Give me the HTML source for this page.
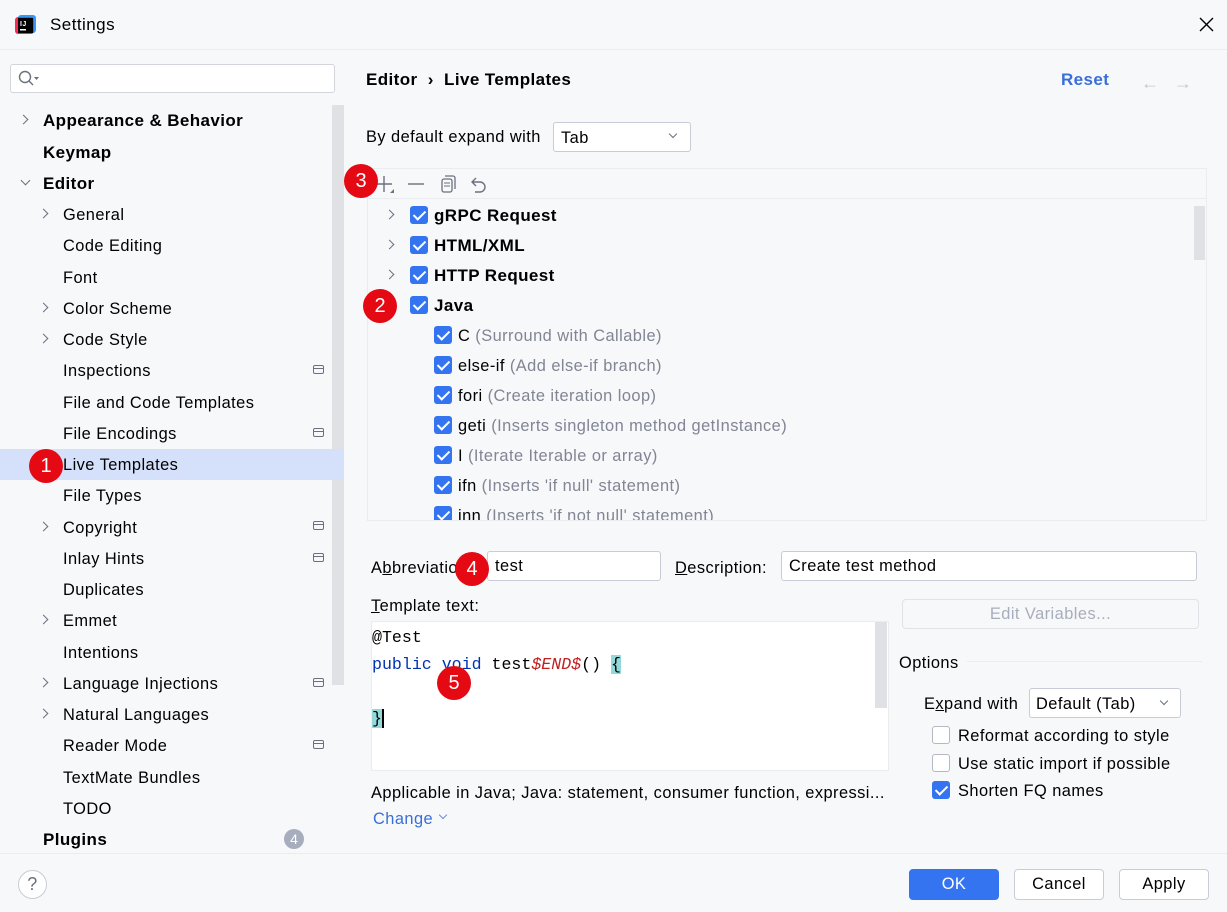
<!DOCTYPE html>
<html><head><meta charset="utf-8"><style>
*{margin:0;padding:0;box-sizing:border-box}
body{width:1227px;height:912px;background:#f7f8fa;font-family:"Liberation Sans",sans-serif;font-size:16.4px;letter-spacing:.45px;color:#000;position:relative;overflow:hidden}
.a{position:absolute;white-space:nowrap}
.r{position:absolute;height:22px;line-height:24px;white-space:nowrap}
.b{font-weight:bold;letter-spacing:.4px}
.chev{position:absolute;width:7px;height:7px;border-right:1.5px solid #6c707e;border-bottom:1.5px solid #6c707e}
.cr{transform:rotate(-45deg)}
.cd{transform:rotate(45deg)}
.cb{position:absolute;width:18px;height:18px;background:#3574f0;border-radius:3px}
.cb:after{content:"";position:absolute;left:6px;top:2px;width:5px;height:10px;border-right:2px solid #fff;border-bottom:2px solid #fff;transform:rotate(45deg)}
.cbe{position:absolute;width:18px;height:18px;border:1px solid #b4b8bf;border-radius:3px;background:#fff}
.g{color:#818594}
.badge{position:absolute;width:34px;height:34px;border-radius:50%;background:#e50914;color:#fff;font-size:20px;line-height:34px;text-align:center;letter-spacing:0}
.pi{position:absolute;width:11px;height:9px;border:1.5px solid #6c707e;border-radius:2px}
.pi:after{content:"";position:absolute;left:0;right:0;top:2px;border-top:1.5px solid #6c707e}
.inp{position:absolute;background:#fff;border:1px solid #c9ccd6;border-radius:3px}
.mono{font-family:"Liberation Mono","DejaVu Sans Mono",monospace;font-size:16.6px;letter-spacing:0}
.btn{position:absolute;height:31px;border:1px solid #c9ccd6;border-radius:4px;background:#fff;text-align:center;line-height:29px}
</style></head><body>
<div class="a" style="left:0;top:0;width:1227px;height:50px;border-bottom:1px solid #ebecf0"></div>
<svg class="a" style="left:15px;top:15px" width="21" height="21"><rect x="0" y="2" width="19" height="17" rx="3" fill="#fe2857"/><rect x="3" y="0" width="18" height="18" rx="3" fill="#087cfa" opacity=".8"/><rect x="3" y="3" width="15" height="15" fill="#000"/><text x="5" y="11" fill="#fff" font-size="7" font-family="Liberation Sans" font-weight="bold">IJ</text><rect x="5" y="14" width="6" height="1.5" fill="#fff"/></svg>
<div class="a" style="left:50px;top:15px;font-size:17px">Settings</div>
<svg class="a" style="left:1199px;top:17px" width="15" height="15"><path d="M1 1L14 14M14 1L1 14" stroke="#000" stroke-width="1.4"/></svg>
<div class="inp" style="left:10px;top:64px;width:325px;height:29px;border-color:#d3d5db"></div>
<svg class="a" style="left:18px;top:70px" width="24" height="18"><circle cx="7" cy="7" r="5.5" fill="none" stroke="#6c707e" stroke-width="1.4"/><path d="M11 11L15 15" stroke="#6c707e" stroke-width="1.4"/><path d="M16 7h5l-2.5 3z" fill="#6c707e"/></svg>
<div class="a" style="left:332px;top:105px;width:12px;height:580px;background:#dfe1e5"></div>
<div class="a" style="left:0;top:449px;width:344px;height:31px;background:#d5e1fb"></div>
<div class="chev cr" style="left:20px;top:116px"></div>
<div class="r b" style="left:43px;top:109px;font-size:17px">Appearance &amp; Behavior</div>
<div class="r b" style="left:43px;top:141px;font-size:17px">Keymap</div>
<div class="chev cd" style="left:22px;top:177px"></div>
<div class="r b" style="left:43px;top:172px;font-size:17px">Editor</div>
<div class="chev cr" style="left:40px;top:210px"></div><div class="r" style="left:63px;top:203px">General</div>
<div class="r" style="left:63px;top:234px">Code Editing</div>
<div class="r" style="left:63px;top:266px">Font</div>
<div class="chev cr" style="left:40px;top:304px"></div><div class="r" style="left:63px;top:297px">Color Scheme</div>
<div class="chev cr" style="left:40px;top:335px"></div><div class="r" style="left:63px;top:328px">Code Style</div>
<div class="r" style="left:63px;top:359px">Inspections</div><div class="pi" style="left:313px;top:365px"></div>
<div class="r" style="left:63px;top:391px">File and Code Templates</div>
<div class="r" style="left:63px;top:422px">File Encodings</div><div class="pi" style="left:313px;top:428px"></div>
<div class="r" style="left:63px;top:453px">Live Templates</div>
<div class="r" style="left:63px;top:484px">File Types</div>
<div class="chev cr" style="left:40px;top:523px"></div><div class="r" style="left:63px;top:516px">Copyright</div><div class="pi" style="left:313px;top:521px"></div>
<div class="r" style="left:63px;top:547px">Inlay Hints</div><div class="pi" style="left:313px;top:553px"></div>
<div class="r" style="left:63px;top:578px">Duplicates</div>
<div class="chev cr" style="left:40px;top:616px"></div><div class="r" style="left:63px;top:609px">Emmet</div>
<div class="r" style="left:63px;top:641px">Intentions</div>
<div class="chev cr" style="left:40px;top:679px"></div><div class="r" style="left:63px;top:672px">Language Injections</div><div class="pi" style="left:313px;top:678px"></div>
<div class="chev cr" style="left:40px;top:710px"></div><div class="r" style="left:63px;top:703px">Natural Languages</div>
<div class="r" style="left:63px;top:734px">Reader Mode</div><div class="pi" style="left:313px;top:740px"></div>
<div class="r" style="left:63px;top:766px">TextMate Bundles</div>
<div class="r" style="left:63px;top:797px">TODO</div>
<div class="r b" style="left:43px;top:828px;font-size:17px">Plugins</div>
<div class="a" style="left:284px;top:829px;width:20px;height:20px;border-radius:50%;background:#a8adbd;color:#fff;font-size:14px;line-height:20px;text-align:center;letter-spacing:0">4</div>
<div class="badge" style="left:29px;top:449px">1</div>
<div class="r b" style="left:366px;top:68px;font-size:17px">Editor&nbsp;&nbsp;›&nbsp;&nbsp;Live Templates</div>
<div class="r b" style="left:1061px;top:68px;color:#3a6fd8;font-size:17px">Reset</div>
<div class="r" style="left:1141px;top:71px;color:#c4c7ce;font-size:18px">←</div>
<div class="r" style="left:1174px;top:71px;color:#c4c7ce;font-size:18px">→</div>
<div class="r" style="left:366px;top:125px">By default expand with</div>
<div class="inp" style="left:553px;top:122px;width:138px;height:30px"></div>
<div class="r" style="left:561px;top:126px">Tab</div>
<div class="chev cd" style="left:670px;top:131px;width:6px;height:6px"></div>
<div class="a" style="left:367px;top:168px;width:840px;height:353px;border:1px solid #ebecf0"></div>
<div class="a" style="left:367px;top:198px;width:840px;border-top:1px solid #ebecf0"></div>
<svg class="a" style="left:372px;top:173px" width="130" height="22"><path d="M12 3v16M4 11h16" stroke="#6c707e" stroke-width="1.4"/><path d="M22 20h-4l4-4z" fill="#6c707e"/><path d="M36 11h16" stroke="#6c707e" stroke-width="1.4"/><rect x="70" y="6" width="10" height="13" rx="2" fill="none" stroke="#6c707e" stroke-width="1.3"/><path d="M73 3h8a2 2 0 0 1 2 2v11" fill="none" stroke="#6c707e" stroke-width="1.3"/><path d="M72 10h6M72 13h6" stroke="#6c707e"/><path d="M104 5l-4 4 4 4M100 9h8a5 5 0 0 1 0 10h-5" fill="none" stroke="#6c707e" stroke-width="1.4"/></svg>
<div class="a" style="left:1194px;top:206px;width:11px;height:54px;background:#dfe1e5"></div>
<div class="chev cr" style="left:386px;top:211px"></div><div class="cb" style="left:410px;top:206px"></div><div class="r b" style="left:434px;top:204px;font-size:17px">gRPC Request</div>
<div class="chev cr" style="left:386px;top:241px"></div><div class="cb" style="left:410px;top:236px"></div><div class="r b" style="left:434px;top:234px;font-size:17px">HTML/XML</div>
<div class="chev cr" style="left:386px;top:271px"></div><div class="cb" style="left:410px;top:266px"></div><div class="r b" style="left:434px;top:264px;font-size:17px">HTTP Request</div>
<div class="cb" style="left:410px;top:296px"></div><div class="r b" style="left:434px;top:294px;font-size:17px">Java</div>
<div class="cb" style="left:434px;top:326px"></div><div class="r" style="left:458px;top:324px">C <span class="g">(Surround with Callable)</span></div>
<div class="cb" style="left:434px;top:356px"></div><div class="r" style="left:458px;top:354px">else-if <span class="g">(Add else-if branch)</span></div>
<div class="cb" style="left:434px;top:386px"></div><div class="r" style="left:458px;top:384px">fori <span class="g">(Create iteration loop)</span></div>
<div class="cb" style="left:434px;top:416px"></div><div class="r" style="left:458px;top:414px">geti <span class="g">(Inserts singleton method getInstance)</span></div>
<div class="cb" style="left:434px;top:446px"></div><div class="r" style="left:458px;top:444px">I <span class="g">(Iterate Iterable or array)</span></div>
<div class="cb" style="left:434px;top:476px"></div><div class="r" style="left:458px;top:474px">ifn <span class="g">(Inserts 'if null' statement)</span></div>
<div class="a" style="left:430px;top:506px;width:700px;height:14px;overflow:hidden"><div class="cb" style="left:4px;top:0"></div><div class="r" style="left:28px;top:-2px">inn <span class="g">(Inserts 'if not null' statement)</span></div></div>
<div class="badge" style="left:344px;top:164px">3</div>
<div class="badge" style="left:363px;top:289px">2</div>
<div class="r" style="left:371px;top:556px">A<u>b</u>breviation:</div>
<div class="inp" style="left:487px;top:551px;width:174px;height:30px"></div>
<div class="r" style="left:495px;top:554px">test</div>
<div class="r" style="left:675px;top:556px"><u>D</u>escription:</div>
<div class="inp" style="left:781px;top:551px;width:416px;height:30px"></div>
<div class="r" style="left:789px;top:554px">Create test method</div>
<div class="badge" style="left:455px;top:552px">4</div>
<div class="r" style="left:371px;top:594px"><u>T</u>emplate text:</div>
<div class="a" style="left:371px;top:621px;width:518px;height:150px;background:#fff;border:1px solid #ebecf0"></div>
<div class="a" style="left:875px;top:622px;width:12px;height:86px;background:#dfe1e5"></div>
<div class="r mono" style="left:372px;top:626px">@Test</div>
<div class="r mono" style="left:372px;top:653px"><span style="color:#0033b3">public void</span> test<span style="color:#c02020;font-style:italic">$END$</span>() <span style="background:#93d9d9">{</span></div>
<div class="r mono" style="left:372px;top:707px"><span style="background:#93d9d9;border-right:2px solid #000">}</span></div>
<div class="badge" style="left:437px;top:666px">5</div>
<div class="r" style="left:371px;top:781px">Applicable in Java; Java: statement, consumer function, expressi...</div>
<div class="r" style="left:373px;top:807px;color:#3a6fd8">Change</div>
<div class="chev cd" style="left:440px;top:812px;width:6px;height:6px;border-color:#6c8fd8"></div>
<div class="btn" style="left:902px;top:599px;width:297px;height:30px;color:#a8adbd;background:#f7f8fa;border-color:#e0e2e7">Edit Variables...</div>
<div class="r" style="left:899px;top:651px">Options</div>
<div class="a" style="left:967px;top:661px;width:235px;border-top:1px solid #ebecf0"></div>
<div class="r" style="left:924px;top:692px">E<u>x</u>pand with</div>
<div class="inp" style="left:1029px;top:688px;width:152px;height:30px"></div>
<div class="r" style="left:1036px;top:692px">Default (Tab)</div>
<div class="chev cd" style="left:1161px;top:698px;width:6px;height:6px"></div>
<div class="cbe" style="left:932px;top:726px"></div><div class="r" style="left:958px;top:724px">Reformat according to style</div>
<div class="cbe" style="left:932px;top:754px"></div><div class="r" style="left:958px;top:752px">Use static import if possible</div>
<div class="cb" style="left:932px;top:781px"></div><div class="r" style="left:958px;top:779px">Shorten FQ names</div>
<div class="a" style="left:0;top:853px;width:1227px;border-top:1px solid #ebecf0"></div>
<div class="a" style="left:18px;top:870px;width:29px;height:29px;border:1px solid #c9ccd6;border-radius:50%;background:#fff;text-align:center;line-height:27px;color:#6c707e;font-size:18px">?</div>
<div class="btn" style="left:909px;top:869px;width:90px;background:#3574f0;border-color:#3574f0;color:#fff">OK</div>
<div class="btn" style="left:1014px;top:869px;width:90px">Cancel</div>
<div class="btn" style="left:1119px;top:869px;width:90px">Apply</div>
</body></html>
